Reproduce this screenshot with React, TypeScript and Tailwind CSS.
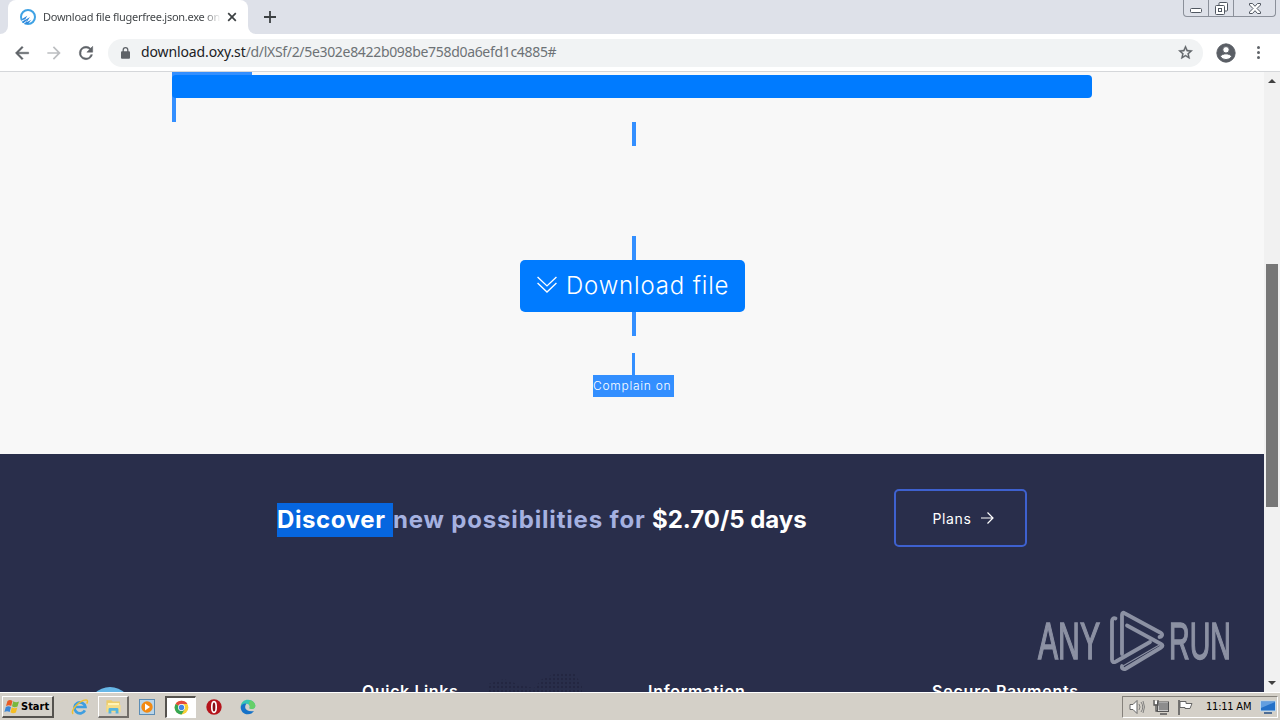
import React from "react";

type P = { children?: React.ReactNode; className?: string };

const Svg = ({ children, className = "", box = "0 0 24 24" }: P & { box?: string }) => (
  <svg viewBox={box} className={"block shrink-0 " + className} fill="none">
    {children}
  </svg>
);

function TabStrip() {
  return (
    <div className="flex h-[34px] bg-[#dee1e9]">
      <div className="flex w-2 items-end bg-white">
        <div className="h-full w-full rounded-br-lg bg-[#dee1e9]" />
      </div>
      <div className="flex h-full w-[240px] items-center rounded-t-lg bg-white pl-3">
        <Svg className="h-4 w-4">
          <circle cx="12" cy="12" r="10.5" stroke="#3fa2e4" strokeWidth="3" />
          <path d="M3 15l8-5-4 7 8-5-5 8 7-4-5 6H6z" fill="#2d87dc" />
          <path d="M1 19l6-3M4 23l6-5" stroke="#fff" strokeWidth="1.5" />
        </Svg>
        <div className="ml-[7px] w-[178px] whitespace-nowrap bg-gradient-to-r from-[#3c4043] from-90% to-[#3c404300] bg-clip-text text-[11px] leading-4 tracking-[-0.27px] text-transparent">
          Download file flugerfree.json.exe on
        </div>
        <Svg className="ml-[6px] h-[10px] w-[10px]" box="0 0 10 10">
          <path d="M1.2 1.2l7.6 7.6M8.8 1.2L1.2 8.8" stroke="#3c4043" strokeWidth="1.7" />
        </Svg>
      </div>
      <div className="w-2 bg-white">
        <div className="h-full w-full rounded-bl-lg bg-[#dee1e9]" />
      </div>
      <div className="flex w-[28px] items-center justify-center">
        <Svg className="h-3 w-3" box="0 0 12 12">
          <path d="M6 0v12M0 6h12" stroke="#3c4043" strokeWidth="1.8" />
        </Svg>
      </div>
      <div className="ml-auto mr-1 flex h-[17px] w-[93px] rounded-b-[4px] border border-t-0 border-[#8b909a]">
        <div className="flex w-[25px] items-center justify-center border-r border-[#8b909a] pt-1">
          <Svg className="h-[5px] w-3" box="0 0 12 5">
            <rect x=".5" y=".5" width="11" height="4" rx="1" stroke="#505761" fill="#fff" />
          </Svg>
        </div>
        <div className="flex w-[25px] items-center justify-center border-r border-[#8b909a]">
          <Svg className="h-[13px] w-[13px]" box="0 0 13 13">
            <rect x="4" y=".5" width="8.5" height="8.5" rx="1" fill="#fff" stroke="#505761" />
            <rect x=".5" y="3.5" width="9" height="9" rx="1" fill="#fff" stroke="#505761" />
            <rect x="3.5" y="6.5" width="3" height="3" stroke="#505761" />
          </Svg>
        </div>
        <div className="flex flex-1 items-center justify-center">
          <Svg className="h-[11px] w-3" box="0 0 12 11">
            <path
              d="M.5.5h3L6 3.3 8.500.5h3v1.500L8 5.500l3.500 3.500v1.500h-3L6 7.700 3.500 10.500h-3V9L4 5.500.5 2z"
              fill="#fff"
              stroke="#505761"
            />
          </Svg>
        </div>
      </div>
    </div>
  );
}

function Toolbar() {
  return (
    <div className="flex h-[38px] items-center border-b border-[#d5d7da] bg-white pl-[12px]">
      <Svg className="h-5 w-5">
        <path d="M20 11H7.830l5.590-5.590L12 4l-8 8 8 8 1.410-1.410L7.830 13H20z" fill="#5f6368" stroke="#5f6368" strokeWidth=".5" />
      </Svg>
      <Svg className="ml-3 h-5 w-5">
        <path d="M12 4l-1.410 1.410L16.170 11H4v2h12.170l-5.580 5.590L12 20l8-8z" fill="#bcbec1" />
      </Svg>
      <Svg className="ml-3 h-5 w-5">
        <path
          d="M17.650 6.350A7.960 7.960 0 0 0 12 4a8 8 0 1 0 7.730 10h-2.080A6 6 0 1 1 12 6c1.660 0 3.140.69 4.220 1.780L13 11h7V4z"
          fill="#5f6368"
          stroke="#5f6368"
          strokeWidth=".6"
        />
      </Svg>
      <div className="ml-3 flex h-7 w-[1095px] items-center rounded-full bg-[#f1f3f4] pl-[13px] pr-[9px]">
        <Svg className="h-3 w-[9px]" box="0 0 9 12">
          <rect x="0" y="4.300" width="9" height="7.400" rx="1" fill="#5f6368" />
          <path d="M2.200 5V3a2.300 2.300 0 0 1 4.600 0v2" stroke="#5f6368" strokeWidth="1.300" />
        </Svg>
        <div className="ml-[11px] -mt-[2px] whitespace-nowrap text-[14px] leading-5 tracking-[-0.32px] text-[#6d7276]">
          <span className="tracking-[-0.12px] text-[#202124]">download.oxy.st</span>/d/lXSf/2/5e302e8422b098be758d0a6efd1c4885#
        </div>
        <Svg className="ml-auto h-[17px] w-[17px]">
          <path
            d="M22 9.240l-7.190-.62L12 2 9.190 8.630 2 9.240l5.460 4.730L5.820 21 12 17.270 18.180 21l-1.630-7.030zM12 15.400l-3.760 2.270 1-4.280-3.320-2.880 4.380-.38L12 6.100l1.710 4.040 4.380.38-3.320 2.880 1 4.280z"
            fill="#5f6368"
            stroke="#5f6368"
            strokeWidth=".5"
          />
        </Svg>
      </div>
      <Svg className="ml-[12px] h-[22px] w-[22px]">
        <path
          d="M12 2a10 10 0 1 0 0 20 10 10 0 0 0 0-20zm0 3a3.500 3.500 0 1 1 0 7 3.500 3.500 0 0 1 0-7zm0 14.200a7.200 7.200 0 0 1-6-3.220c.03-1.990 4-3.080 6-3.080s5.970 1.090 6 3.080a7.200 7.200 0 0 1-6 3.220z"
          fill="#5a5e65"
          stroke="#5a5e65"
        />
      </Svg>
      <div className="ml-[20px] flex flex-col gap-[2px]">
        <span className="h-[3px] w-[3px] rounded-full bg-[#5f6368]" />
        <span className="h-[3px] w-[3px] rounded-full bg-[#5f6368]" />
        <span className="h-[3px] w-[3px] rounded-full bg-[#5f6368]" />
      </div>
    </div>
  );
}

function DownloadSection() {
  return (
    <section className="h-[382px] bg-[#f8f8f8]">
      <div className="ml-[172px] w-[920px]">
        <div className="h-[3px] w-20 bg-[#338fff]" />
        <div className="bg-gradient-to-r from-[#338fff] from-[4px] to-transparent to-[4px]">
          <div className="h-[23px] rounded bg-[#007bff]" />
        </div>
        <div className="h-6 w-1 bg-[#338fff]" />
      </div>
      <div className="flex w-[1265px] flex-col items-center">
        <div className="ml-[3px] h-6 w-1 bg-[#338fff]" />
        <div className="ml-[3px] mt-[90px] h-6 w-1 bg-[#338fff]" />
        <button className="flex h-[52px] w-[225px] items-center rounded-[5px] bg-[#007bff] pl-4 text-white">
          <Svg className="mb-[3px] h-[17px] w-[22px]" box="0 0 22 18">
            <path d="M1 1l10 9.500L21 1M1 7.500L11 17l10-9.500" stroke="#fff" strokeWidth="1.400" />
          </Svg>
          <span className="ml-2 whitespace-nowrap font-[Inter] text-[24px] font-light leading-8 tracking-[0.83px]">
            Download file
          </span>
        </button>
        <div className="ml-[3px] h-6 w-1 bg-[#338fff]" />
        <div className="ml-[2px] mt-[17px] h-[22px] w-[3px] bg-[#338fff]" />
        <div className="ml-[2px] h-[22px] w-[81px] whitespace-nowrap bg-[#338fff] font-[Inter] text-[12px] font-light leading-[22px] tracking-[0.72px] text-white">
          Complain on
        </div>
      </div>
    </section>
  );
}

function PlansBanner() {
  return (
    <section className="flex items-start pl-[277px] pt-[35px]">
      <h2 className="mt-[14px] flex w-[617px] whitespace-pre font-[Inter] text-[24px] font-bold leading-[34px] text-[#a5b1e0]">
        <span className="w-[116px] bg-[#0666df] tracking-[0.6px] text-white">Discover </span>
        <span className="w-[259px] tracking-[0.83px]">new possibilities for </span>
        <span className="tracking-[-0.02px] text-white">$2.70/5 days</span>
      </h2>
      <button className="flex h-[58px] w-[133px] items-center rounded-[5px] border-2 border-[#3e61cf] pl-9 font-[Inter] text-[14px] text-white">
        <span className="w-[40px] tracking-[0.6px]">Plans</span>
        <Svg className="ml-[9px] h-3 w-[13px]" box="0 0 13 12">
          <path d="M0 6h12M6.500.5L12 6l-5.500 5.500" stroke="#fff" strokeWidth="1.200" />
        </Svg>
      </button>
    </section>
  );
}

function Watermark() {
  return (
    <div className="absolute left-[1038px] top-[538px] flex h-[64px] items-center text-[#8c91a3]">
      <span className="-mt-[3px] w-[66px]">
        <span className="inline-block origin-left scale-x-[0.58] font-['Liberation_Sans'] text-[52px] leading-[64px] [-webkit-text-stroke:1.6px_#8c91a3]">ANY</span>
      </span>
      <Svg className="ml-[5px] h-[64px] w-[58px]" box="0 0 58 64">
        <g stroke="#8c91a3" strokeWidth="3.800" strokeLinejoin="round" strokeLinecap="round">
          <path d="M6.500 8.500C4.500 7.500 3 9 3 11.500v38q0 4 4 2L41 32" />
          <path d="M13 44V5q0-3.500 3-1.500L52 23c2 1.500 1 4-1.500 4" />
          <path d="M18 15.500l34 18.500q3 1.800 0 3.500L17 58.500c-2.500 1.500-4.500 0-4-2.500" />
          <path d="M13 56.500L52 34" strokeWidth="1.200" />
        </g>
      </Svg>
      <span className="-mt-[3px] ml-[2px] w-[64px]">
        <span className="inline-block origin-left scale-x-[0.55] font-['Liberation_Sans'] text-[52px] leading-[64px] [-webkit-text-stroke:1.6px_#8c91a3]">RUN</span>
      </span>
    </div>
  );
}

function Footer() {
  return (
    <footer className="mt-[132px] flex h-[24px] items-start font-[Inter] text-[16px] font-semibold leading-6 text-white">
      <div className="ml-[88px] w-[274px] pt-[8px]">
        <div className="h-[44px] w-[44px] rounded-full bg-[#67b7e7]" />
      </div>
      <div className="w-[126px] tracking-[0.6px]">Quick Links</div>
      <Svg className="-mt-[6px] h-[24px] w-[100px]" box="0 0 100 24">
        <defs>
          <pattern id="dots" width="4" height="4" patternUnits="userSpaceOnUse">
            <circle cx="2" cy="2" r="1.200" fill="#222640" />
          </pattern>
        </defs>
        <path d="M0 24V11l16-5 16 6 14 3 8-9 14-6h18l8 12v12z" fill="url(#dots)" />
      </Svg>
      <div className="ml-[60px] w-[284px] tracking-[0.75px]">Information</div>
      <div className="tracking-[0.8px]">Secure Payments</div>
    </footer>
  );
}

function Scrollbar() {
  return (
    <div className="flex w-4 flex-col items-center bg-[#f1f1f1]">
      <div className="mt-[7px] h-0 w-0 border-x-4 border-b-4 border-x-transparent border-b-[#404040]" />
      <div className="mt-[181px] h-[243px] w-3 bg-[#777777]" />
      <div className="mb-[7px] mt-auto h-0 w-0 border-x-4 border-t-4 border-x-transparent border-t-[#404040]" />
    </div>
  );
}

function Taskbar() {
  return (
    <div className="relative flex h-[28px] items-start border-t border-white bg-[#d4d0c8] pt-[3px] text-black">
      <div className="ml-[2px] flex h-[22px] w-[52px] items-center border-b-2 border-l border-r-2 border-t border-b-[#55524e] border-l-white border-r-[#55524e] border-t-white">
        <Svg className="ml-[1px] h-[15px] w-[16px]" box="0 0 16 15">
          <path d="M3.500 2Q6 0 8.500 2L7.200 7Q5 5.500 2 7z" fill="#e95b25" />
          <path d="M9.300 2.300Q12 4 15 2.500L13.500 7.500Q10.500 9 8 7.300z" fill="#79b83d" />
          <path d="M1.800 8Q4.500 6.400 7 8l-1.300 5Q3 11.400.4 13z" fill="#3b86d7" />
          <path d="M7.800 8.300q2.700 1.600 5.500.2l-1.400 5Q9 15 6.500 13.300z" fill="#f5bd23" />
        </Svg>
        <span className="ml-[1px] text-[11px] font-bold leading-4 tracking-[0px]">Start</span>
      </div>
      <div className="ml-[8px] flex w-[36px] justify-center">
        <Svg className="mt-[2px] h-[18px] w-[18px]">
          <path d="M18.500 16.500A7.300 7.300 0 1 1 19.200 12H6" stroke="#3e9ee0" strokeWidth="3.600" />
          <path d="M3 21C-2 18 11 3 20 2.500c3 .2 2 3 1 5" stroke="#f0c030" strokeWidth="2" />
        </Svg>
      </div>
      <div className="flex h-[22px] w-[31px] items-center justify-center border-b-2 border-l border-r-2 border-t border-b-[#706d69] border-l-white border-r-[#706d69] border-t-white">
        <Svg className="h-[17px] w-[17px]">
          <path d="M2 3h7l2 2h10v14H2z" fill="#edcb68" />
          <path d="M4 7h16v4H4z" fill="#fff3b6" />
          <path d="M2 10h20v10H2z" fill="#f4dc87" />
          <path d="M5 22v-6q0-2 2-2h10q2 0 2 2v6h-4v-4H9v4z" fill="#55b5df" />
        </Svg>
      </div>
      <div className="flex w-[36px] justify-center">
        <Svg className="mt-[3px] h-4 w-4" box="0 0 16 16">
          <rect x=".5" y=".5" width="15" height="15" fill="#b9d5e9" stroke="#5c8db5" />
          <circle cx="8" cy="8" r="5.700" fill="#f28a13" />
          <path d="M6 4.500l5 3.500-5 3.500z" fill="#fff" />
        </Svg>
      </div>
      <div className="flex h-[22px] w-[31px] items-center justify-center border-b border-l-2 border-r border-t-2 border-b-white border-l-[#55524e] border-r-white border-t-[#55524e] bg-white">
        <Svg className="h-[15px] w-[15px]">
          <circle cx="12" cy="12" r="11" fill="#f8cf36" />
          <path d="M12 12L2.500 6.500A11 11 0 0 1 21.500 6.500H12z" fill="#e34b3e" />
          <path d="M12 12L2.500 6.500A11 11 0 0 0 12 23l5-8z" fill="#35a653" />
          <circle cx="12" cy="12" r="5.500" fill="#fff" />
          <circle cx="12" cy="12" r="4.300" fill="#4385e6" />
        </Svg>
      </div>
      <div className="flex w-[36px] justify-center">
        <Svg className="mt-[3px] h-4 w-4">
          <circle cx="12" cy="12" r="11.500" fill="#b5141b" />
          <ellipse cx="12" cy="12" rx="3.300" ry="8" fill="#861016" stroke="#fff" strokeWidth="2.500" />
        </Svg>
      </div>
      <div className="flex w-[32px] justify-center">
        <Svg className="mt-[3px] h-4 w-4">
          <path d="M1 12C1 5 6 1 12 1c7 0 11 5 11 9 0 5-6 6-9 4 2-5-2-7-5-7-4 0-7 3-8 5z" fill="#35c5b4" />
          <path d="M15 2c5 1 8 5 8 8 0 5-6 6-9 4 2-2 1-5-1-6z" fill="#65cf68" />
          <path d="M1 12c1-4 5-6 9-5-4 3-4 13 11 11-2 3-5 5-9 5C5 23 1 18 1 12z" fill="#1572c8" />
        </Svg>
      </div>
      <div className="ml-auto mr-[2px] flex h-[22px] w-[156px] items-center border border-b-white border-l-[#85817b] border-r-white border-t-[#85817b]">
        <Svg className="ml-[6px] h-4 w-4" box="0 0 16 16">
          <path d="M1 5.500h3L8 1.500v13l-4-4H1z" fill="#fff" stroke="#666" />
          <path d="M10 5q2 3 0 6M12 3q3.500 5 0 10M14 2q3 6 0 12" stroke="#777" strokeWidth=".9" />
        </Svg>
        <Svg className="ml-[8px] h-4 w-4" box="0 0 16 16">
          <rect x="5" y="3.500" width="10.500" height="8.500" fill="#8d8d8d" stroke="#fff" />
          <rect x="4.500" y="3" width="11" height="9.500" stroke="#555" />
          <path d="M1 1v5h4V1M3 6v6h2M7 15h7" stroke="#555" strokeWidth="1.300" />
          <path d="M2 2h2v3H2z" fill="#fff" />
        </Svg>
        <Svg className="ml-[8px] h-4 w-4" box="0 0 16 16">
          <path d="M2 1v15" stroke="#555" strokeWidth="1.500" />
          <path d="M3 2.500h6v2h6l-2 5H8v-1H3z" fill="#fff" stroke="#666" />
        </Svg>
        <span className="ml-[13px] w-[47px] whitespace-nowrap text-[11px] leading-4 tracking-[-0.22px]">11:11 AM</span>
        <Svg className="ml-[7px] h-[14px] w-[16px]" box="0 0 16 14">
          <path d="M.5 1h15v10H.5z" fill="#2471c8" stroke="#bdd9ef" />
          <path d="M1 2h14L1 8z" fill="#629fe0" />
          <path d="M4 13h8" stroke="#234e84" strokeWidth="1.500" />
        </Svg>
      </div>
    </div>
  );
}

export default function App() {
  return (
    <div className="flex h-[720px] w-[1280px] flex-col overflow-hidden bg-white font-['DejaVu_Sans_Condensed','Noto_Sans',sans-serif]">
      <div className="font-['Noto_Sans',sans-serif]">
        <TabStrip />
        <Toolbar />
      </div>
      <div className="relative flex h-[620px]">
        <main className="h-full w-[1264px] bg-[#292e4b]">
          <DownloadSection />
          <PlansBanner />
          <Footer />
        </main>
        <Scrollbar />
        <Watermark />
      </div>
      <Taskbar />
    </div>
  );
}
